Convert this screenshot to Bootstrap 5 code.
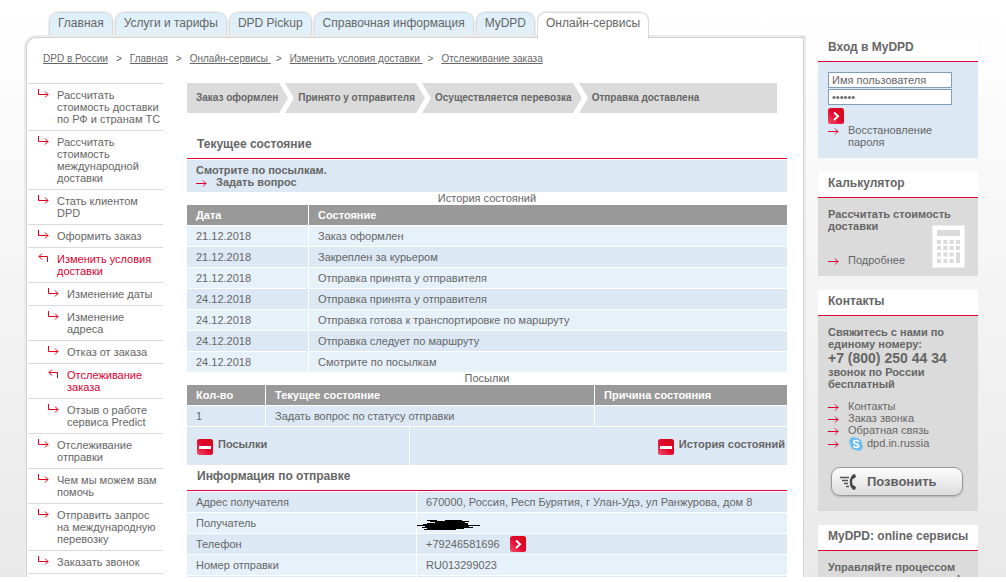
<!DOCTYPE html>
<html lang="ru">
<head>
<meta charset="utf-8">
<meta name="viewport" content="width=device-width, initial-scale=1">
<title>Отслеживание заказа</title>
<link href="https://cdn.jsdelivr.net/npm/bootstrap@5.3.0/dist/css/bootstrap.min.css" rel="stylesheet">
<style>
  :root { --red: #dc0032; --text: #666; --line: #d9d9d9; --blue: #dce8f4; --pale: #e6f1fa; --grey: #dbdbdb; }
  body { font: 11px/12px "Liberation Sans", Arial, sans-serif; color: var(--text); background: #fff; }
  a { color: inherit; text-decoration: none; }
  h1, h2 { font-size: 12px; line-height: 14px; font-weight: bold; margin: 0; }
  svg { flex: none; display: block; }
  .page { height: calc(100vh - 5px); overflow: hidden; padding: 12px 28px 0 26px; gap: 14px;
    background: linear-gradient(#fff 0, #fefefe 30px, #e9e9e9 100%); }
  .tabs { gap: 2px; padding-left: 23px; }
  .tabs .nav-link { font-size: 12px; line-height: 20px; height: 25px; padding: 0 8px 3px; color: var(--text);
    border: 1px solid var(--line); border-bottom: 0; border-radius: 9px 9px 0 0;
    background: linear-gradient(#dcf0fb, #e4eff7); box-shadow: 0 0 0 1px #eee; white-space: nowrap; }
  .tabs .nav-link.active { background: #fff; height: 27px; margin-bottom: -2px; position: relative; box-shadow: 0 -1px 0 #eee; }
  .sheet { background: #fff; border: 1px solid #d2d2d2; border-bottom: 0; border-radius: 10px 0 0 0; box-shadow: 0 0 0 2px #ebebeb; min-height: 0; }
  .crumbs { font-size: 10px; padding: 15px 16px 18px; }
  .crumbs a { text-decoration: underline; white-space: pre; }
  .crumbs span { margin: 0 8px; }
  .crumbs .tight { margin-left: 5px; }
  .side { width: 136px; padding-left: 1px; }
  .side ul { border-top: 1px solid var(--grey); }
  .side a { display: flex; gap: 8px; padding: 5px 0 5px 10px; border-bottom: 1px solid var(--grey); }
  .side .sub a { padding-left: 20px; }
  .side .open { color: var(--red); }
  .body { padding: 0 16px 0 24px; }
  .steps { background: var(--grey); height: 30px; font-size: 10px; font-weight: bold; margin-right: 10px; padding-left: 9px; gap: 1px; }
  .steps svg { margin-right: 3px; }
  .title { padding: 0 10px 7px; border-bottom: 1px solid var(--red); margin-bottom: 1px; }
  .note { background: var(--blue); padding: 4px 9px; font-weight: bold; }
  .arrow-link { display: flex; gap: 9px; }
  .grid { width: 100%; border-collapse: separate; border-spacing: 0; table-layout: fixed; }
  .grid caption { caption-side: top; text-align: center; color: var(--text); padding: 0 0 1px; }
  .grid th, .grid td { height: 21px; padding: 0 9px; border-bottom: 1px solid #fff; background: var(--blue); font-weight: normal; }
  .grid th + *, .grid td + * { border-left: 1px solid #fff; }
  .grid thead th { background: #999; color: #fff; font-weight: bold; }
  .grid tbody tr:last-child > * { height: 20px; border-bottom: 0; }
  .odd-pale tbody tr:nth-child(odd) > *, .even-pale tbody tr:nth-child(even) > * { background: var(--pale); }
  .toggles { margin-top: 1px; }
  .toggle { background: var(--blue); height: 38px; padding: 11px 2px 0 10px; }
  .toggle.right { flex: 0 0 63%; }
  .toggle button { display: flex; gap: 5px; font-weight: bold; }
  .plain { border: 0; background: none; padding: 0; color: inherit; }
  .tel { gap: 10px; }
  .aside { width: 160px; padding-top: 24px; gap: 14px; }
  .box h2 { background: #fff; padding: 4px 0 7px 10px; border-bottom: 1px solid var(--red); white-space: nowrap; }
  .box .inner { padding: 10px; background: var(--grey); }
  .box .login { background: var(--blue); }
  .login input { width: 124px; height: 16px; border: 1px solid #7f9db9; padding: 0 3px; font-size: 11px; line-height: 12px; color: var(--text); background: #fff; display: block; border-radius: 0; }
  .login input::placeholder { color: var(--text); opacity: 1; }
  .login input + input { margin-top: 1px; }
  .go { margin-top: 3px; }
  .box .calc { padding-bottom: 8px; }
  .calc a { margin-bottom: 2px; }
  .calc-icon { margin: -7px 3px 0 0; }
  .phone { font-size: 14px; line-height: 16px; }
  .links { padding: 10px 0 16px; }
  .links .skype { padding-top: 1px; }
  .skype svg + svg { margin: 0 -5px 0 1px; }
  .box .contacts { padding-bottom: 15px; }
  .call { height: 29px; border: 1px solid #9a9a9a; border-radius: 9px; color: #606060; font-size: 13px; font-weight: bold;
    background: linear-gradient(#fdfdfd, #dcdcdc); box-shadow: 0 1px 2px #8888; gap: 11px; padding: 0 8px; margin-left: 3px; width: 132px; }
</style>
</head>
<body>
<svg width="0" height="0" class="position-absolute" aria-hidden="true">
  <defs>
    <linearGradient id="redfill" x1="0" y1="1" x2="1" y2="0"><stop offset="0" stop-color="#f4506a"/><stop offset=".5" stop-color="#e1062c"/><stop offset="1" stop-color="#d20a12"/></linearGradient>
    <symbol id="down" viewBox="0 0 11 12"><path d="M.5 0v5.500H10M7 2.500l3 3-3 3" fill="none" stroke="#e2001a"/></symbol>
    <symbol id="back" viewBox="0 0 11 12"><path d="M9.500 9V3.500H1M4 .5l-3 3 3 3" fill="none" stroke="#e2001a"/></symbol>
    <symbol id="arrow" viewBox="0 0 11 12"><path d="M0 7.500h10M7 4.500l3 3-3 3" fill="none" stroke="#dc0032"/></symbol>
    <symbol id="go" viewBox="0 0 16 16"><rect width="16" height="16" rx="2.500" fill="url(#redfill)"/><path d="M6 4.500l4 3.700-4 3.700" fill="none" stroke="#fff" stroke-width="2"/></symbol>
    <symbol id="minus" viewBox="0 0 16 17"><rect y="1" width="16" height="16" rx="2.500" fill="url(#redfill)"/><path d="M2 8h12v3H2z" fill="#fff"/></symbol>
    <symbol id="chev" viewBox="0 0 15 30"><path d="M0 0h6l9 15-9 15H0l9-15z" fill="#fff"/></symbol>
  </defs>
</svg>

<div class="page d-flex">
  <div class="d-flex flex-column flex-grow-1">
    <nav class="nav tabs flex-nowrap">
      <a class="nav-link" href="#">Главная</a>
      <a class="nav-link" href="#">Услуги и тарифы</a>
      <a class="nav-link" href="#">DPD Pickup</a>
      <a class="nav-link" href="#">Справочная информация</a>
      <a class="nav-link" href="#">MyDPD</a>
      <a class="nav-link active" href="#">Онлайн-сервисы</a>
    </nav>
    <div class="sheet flex-grow-1">
      <nav class="crumbs"><a href="#">DPD в России</a><span>&gt;</span><a href="#">Главная</a><span>&gt;</span><a href="#">Онлайн-сервисы </a><span class="tight">&gt;</span><a href="#">Изменить условия доставки </a><span class="tight">&gt;</span><a href="#">Отслеживание заказа</a></nav>
      <div class="d-flex">
        <nav class="side flex-shrink-0">
          <ul class="list-unstyled mb-0">
            <li><a href="#"><svg width="11" height="12"><use href="#down"/></svg><span>Рассчитать стоимость доставки<br>по РФ и странам ТС</span></a></li>
            <li><a href="#"><svg width="11" height="12"><use href="#down"/></svg><span>Рассчитать стоимость<br>международной доставки</span></a></li>
            <li><a href="#"><svg width="11" height="12"><use href="#down"/></svg><span>Стать клиентом<br>DPD</span></a></li>
            <li><a href="#"><svg width="11" height="12"><use href="#down"/></svg><span>Оформить заказ</span></a></li>
            <li><a class="open" href="#"><svg width="11" height="12"><use href="#back"/></svg><span>Изменить условия доставки</span></a></li>
            <li class="sub"><a href="#"><svg width="11" height="12"><use href="#down"/></svg><span>Изменение даты</span></a></li>
            <li class="sub"><a href="#"><svg width="11" height="12"><use href="#down"/></svg><span>Изменение<br>адреса</span></a></li>
            <li class="sub"><a href="#"><svg width="11" height="12"><use href="#down"/></svg><span>Отказ от заказа</span></a></li>
            <li class="sub"><a class="open" href="#"><svg width="11" height="12"><use href="#back"/></svg><span>Отслеживание<br>заказа</span></a></li>
            <li class="sub"><a href="#"><svg width="11" height="12"><use href="#down"/></svg><span>Отзыв о работе<br>сервиса Predict</span></a></li>
            <li><a href="#"><svg width="11" height="12"><use href="#down"/></svg><span>Отслеживание<br>отправки</span></a></li>
            <li><a href="#"><svg width="11" height="12"><use href="#down"/></svg><span>Чем мы можем вам помочь</span></a></li>
            <li><a href="#"><svg width="11" height="12"><use href="#down"/></svg><span>Отправить запрос<br>на международную перевозку</span></a></li>
            <li><a href="#"><svg width="11" height="12"><use href="#down"/></svg><span>Заказать звонок</span></a></li>
          </ul>
        </nav>
        <main class="body flex-grow-1">
          <div class="steps d-flex align-items-center">
            <span>Заказ оформлен</span><svg width="15" height="30"><use href="#chev"/></svg>
            <span>Принято у отправителя</span><svg width="15" height="30"><use href="#chev"/></svg>
            <span>Осуществляется перевозка</span><svg width="15" height="30"><use href="#chev"/></svg>
            <span>Отправка доставлена</span>
          </div>
          <h1 class="title mt-4">Текущее состояние</h1>
          <div class="note">
            <div>Смотрите по посылкам.</div>
            <a class="arrow-link" href="#"><svg width="11" height="12"><use href="#arrow"/></svg><span>Задать вопрос</span></a>
          </div>
          <table class="grid odd-pale">
            <caption>История состояний</caption>
            <colgroup><col style="width:121px"><col></colgroup>
            <thead><tr><th scope="col">Дата</th><th scope="col">Состояние</th></tr></thead>
            <tbody>
              <tr><td>21.12.2018</td><td>Заказ оформлен</td></tr>
              <tr><td>21.12.2018</td><td>Закреплен за курьером</td></tr>
              <tr><td>21.12.2018</td><td>Отправка принята у отправителя</td></tr>
              <tr><td>24.12.2018</td><td>Отправка принята у отправителя</td></tr>
              <tr><td>24.12.2018</td><td>Отправка готова к транспортировке по маршруту</td></tr>
              <tr><td>24.12.2018</td><td>Отправка следует по маршруту</td></tr>
              <tr><td>24.12.2018</td><td>Смотрите по посылкам</td></tr>
            </tbody>
          </table>
          <table class="grid">
            <caption>Посылки</caption>
            <colgroup><col style="width:78px"><col><col style="width:193px"></colgroup>
            <thead><tr><th scope="col">Кол-во</th><th scope="col">Текущее состояние</th><th scope="col">Причина состояния</th></tr></thead>
            <tbody><tr><td>1</td><td>Задать вопрос по статусу отправки</td><td></td></tr></tbody>
          </table>
          <div class="toggles d-flex">
            <div class="toggle flex-grow-1"><button type="button" class="plain"><svg width="16" height="17"><use href="#minus"/></svg><span>Посылки</span></button></div>
            <div class="toggle right border-start border-white d-flex justify-content-end align-items-start"><button type="button" class="plain"><svg width="16" height="17"><use href="#minus"/></svg><span>История состояний</span></button></div>
          </div>
          <h2 class="title pt-1">Информация по отправке</h2>
          <table class="grid even-pale">
            <colgroup><col style="width:229px"><col></colgroup>
            <tbody>
              <tr><th scope="row">Адрес получателя</th><td>670000, Россия, Респ Бурятия, г Улан-Удэ, ул Ранжурова, дом 8</td></tr>
              <tr><th scope="row">Получатель</th><td class="p-0"><svg width="64" height="16" viewBox="0 0 64 16"><path d="M10 5h10v1h8V5h17v1h7v1h-4v1h3v2h12v1H52v1h4v1h-9v1h-8v1H7v-1h3v-1H5v-1h3v-1H0v-1h6V9h4V8h8V7h-5V6h-3z" fill="#000"/></svg></td></tr>
              <tr><th scope="row">Телефон</th><td><div class="tel d-flex align-items-center"><span>+79246581696</span><button type="button" class="plain" aria-label="Далее"><svg width="16" height="16"><use href="#go"/></svg></button></div></td></tr>
              <tr><th scope="row">Номер отправки</th><td>RU013299023</td></tr>
              <tr><th scope="row"></th><td></td></tr>
            </tbody>
          </table>
        </main>
      </div>
    </div>
  </div>

  <aside class="aside d-flex flex-column flex-shrink-0">
    <section class="box">
      <h2>Вход в MyDPD</h2>
      <form class="inner login">
        <input type="text" placeholder="Имя пользователя" aria-label="Имя пользователя">
        <input type="password" value="secret" aria-label="Пароль">
        <button type="button" class="plain go d-block" aria-label="Войти"><svg width="16" height="16"><use href="#go"/></svg></button>
        <a class="arrow-link" href="#"><svg width="11" height="12"><use href="#arrow"/></svg><span>Восстановление пароля</span></a>
      </form>
    </section>
    <section class="box">
      <h2>Калькулятор</h2>
      <div class="inner calc">
        <strong class="d-block">Рассчитать стоимость доставки</strong>
        <div class="d-flex justify-content-between align-items-end">
          <a class="arrow-link" href="#"><svg width="11" height="12"><use href="#arrow"/></svg><span>Подробнее</span></a>
          <svg class="calc-icon" width="33" height="43" viewBox="0 0 33 43"><path d="M0 0h33v43H0z" fill="#eee"/><path d="M1 1h31v41H1z" fill="#fff"/><path d="M5 5h23v6H5z" fill="#dbdbdb"/><path d="M5 17h23M5 23h23M5 29.500h23M5 36h23" stroke="#dbdbdb" stroke-width="4" stroke-dasharray="4 2.330"/><path d="M24 28h4v10h-4z" fill="#dbdbdb"/></svg>
        </div>
      </div>
    </section>
    <section class="box">
      <h2>Контакты</h2>
      <div class="inner contacts">
        <strong class="d-block">Свяжитесь с нами по<br>единому номеру:<br><span class="phone">+7 (800) 250 44 34</span><br>звонок по России бесплатный</strong>
        <div class="links">
          <a class="arrow-link" href="#"><svg width="11" height="12"><use href="#arrow"/></svg><span>Контакты</span></a>
          <a class="arrow-link" href="#"><svg width="11" height="12"><use href="#arrow"/></svg><span>Заказ звонка</span></a>
          <a class="arrow-link" href="#"><svg width="11" height="12"><use href="#arrow"/></svg><span>Обратная связь</span></a>
          <a class="arrow-link skype" href="#"><svg width="11" height="12"><use href="#arrow"/></svg><svg width="14" height="14" viewBox="0 0 14 14"><circle cx="4.500" cy="4.500" r="4.300" fill="#6cbdf0"/><circle cx="9.500" cy="9.500" r="4.300" fill="#6cbdf0"/><circle cx="7" cy="7" r="6" fill="#6cbdf0"/><path d="M9.800 4.800C9 3.200 4.700 3 4.700 5.200c0 2.300 5 1.300 5 3.600 0 2.100-4.300 2-5.300.2" fill="none" stroke="#fff" stroke-width="1.600"/></svg><span>dpd.in.russia</span></a>
        </div>
        <button type="button" class="call d-flex align-items-center"><svg width="16" height="16" viewBox="0 0 16 16"><path d="M0 3.500h9M2 6.500h6M4 9.500h4M6 12.500h3" stroke="#555" stroke-width="1.400"/><path d="M14 1.800c-4 2-4 10.500 0 12.700" fill="none" stroke="#444" stroke-width="2.400"/><path d="M12 1l3-1 1 3-3 2zM12 15l3 1 1-3-3-2z" fill="#444"/></svg><span>Позвонить</span></button>
      </div>
    </section>
    <section class="box">
      <h2>MyDPD: online сервисы</h2>
      <div class="inner"><strong class="d-block">Управляйте процессом доставки интерактивно!</strong></div>
    </section>
  </aside>
</div>
<script src="https://cdn.jsdelivr.net/npm/bootstrap@5.3.0/dist/js/bootstrap.bundle.min.js"></script>
</body>
</html>
